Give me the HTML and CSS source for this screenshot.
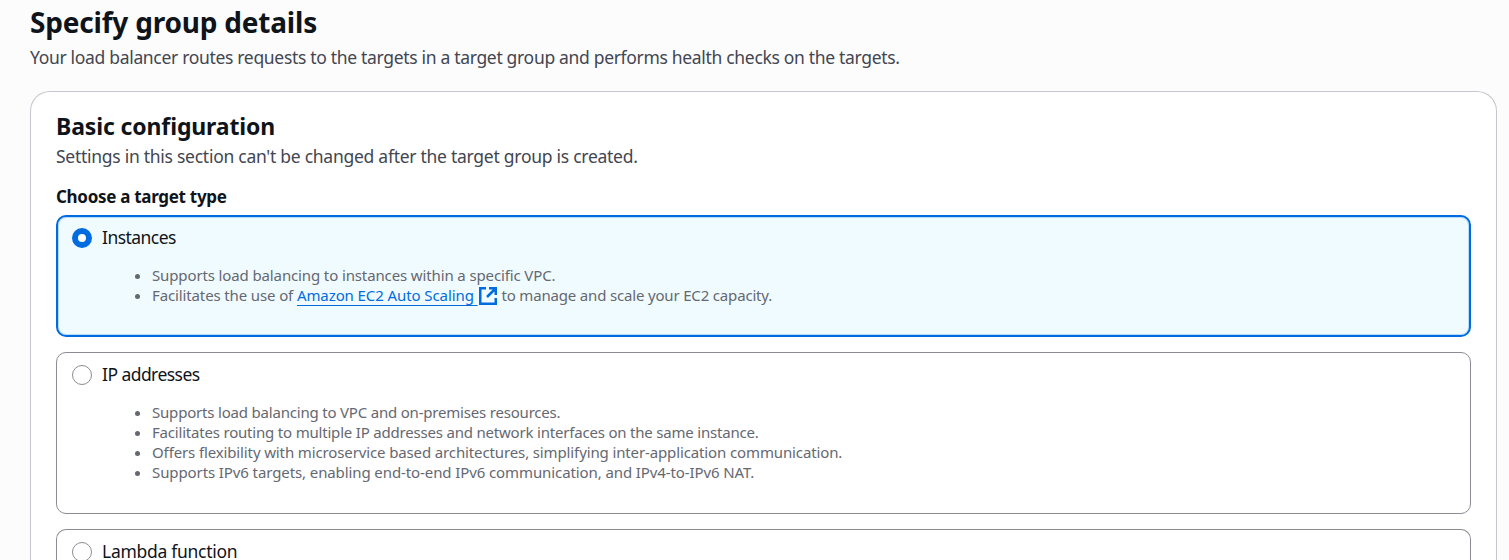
FILE: index.html
```html
<!DOCTYPE html>
<html lang="en">
<head>
<meta charset="utf-8">
<title>Specify group details</title>
<link rel="stylesheet" href="styles.css">
</head>
<body>
<main class="page">
  <header class="page-header">
    <h1 class="page-title">Specify group details</h1>
    <p class="page-description">Your load balancer routes requests to the targets in a target group and performs health checks on the targets.</p>
  </header>
  <section class="container">
    <h2 class="container-title">Basic configuration</h2>
    <p class="container-description">Settings in this section can't be changed after the target group is created.</p>
    <h3 class="field-label">Choose a target type</h3>
    <div class="tiles">
      <div class="tile tile-selected">
        <span class="radio radio-checked"></span>
        <div class="tile-body">
          <div class="tile-label label-instances">Instances</div>
          <ul class="tile-list">
            <li>Supports load balancing to instances within a specific VPC.</li>
            <li>Facilitates the use of <a class="link">Amazon EC2 Auto Scaling <svg class="external-icon" viewBox="0 0 20 20"><path d="M8 2.25H2.25V17.75H17.75V12M11 2.25H17.75V9M17.5 2.5L9 11"/></svg></a> <span class="after-link">to manage and scale your EC2 capacity.</span></li>
          </ul>
        </div>
      </div>
      <div class="tile">
        <span class="radio"></span>
        <div class="tile-body">
          <div class="tile-label label-ip">IP addresses</div>
          <ul class="tile-list">
            <li class="text-tight">Supports load balancing to VPC and on-premises resources.</li>
            <li class="text-tight">Facilitates routing to multiple IP addresses and network interfaces on the same instance.</li>
            <li>Offers flexibility with microservice based architectures, simplifying inter-application communication.</li>
            <li class="text-wide">Supports IPv6 targets, enabling end-to-end IPv6 communication, and IPv4-to-IPv6 NAT.</li>
          </ul>
        </div>
      </div>
      <div class="tile tile-last">
        <span class="radio"></span>
        <div class="tile-body">
          <div class="tile-label label-lambda">Lambda function</div>
        </div>
      </div>
    </div>
  </section>
</main>
</body>
</html>
```

FILE: styles.css
```css
* { box-sizing: border-box; }
html, body { height: 100%; }
body {
  margin: 0;
  overflow: hidden;
  background: #fcfcfd;
  color: #0f141a;
  font-family: "Noto Sans", "Open Sans", sans-serif;
}
h1, h2, h3, p, ul { margin: 0; }
.page {
  display: flex;
  flex-direction: column;
  height: 100%;
  padding: 4px 12px 0 30px;
}
.page-title { font-size: 28px; line-height: 36px; letter-spacing: -0.2px; }
.page-description {
  margin-top: 5px;
  font-size: 17.5px;
  line-height: 25px;
  letter-spacing: -0.32px;
  color: #424650;
}
.container {
  display: flex;
  flex-direction: column;
  flex: 1;
  min-height: 0;
  margin-top: 21px;
  padding: 19px 25px 0;
  border: 1px solid #c6c6cd;
  border-bottom: 0;
  border-radius: 20px 20px 0 0;
  background: #fff;
}
.container-title { font-size: 23px; line-height: 30px; letter-spacing: -0.13px; }
.container-description {
  margin-top: 3px;
  font-size: 17.5px;
  line-height: 25px;
  letter-spacing: -0.27px;
  color: #424650;
}
.field-label { margin-top: 15px; font-size: 17px; line-height: 25px; letter-spacing: -0.3px; }
.tiles {
  display: flex;
  flex-direction: column;
  flex: 1;
  min-height: 0;
  gap: 15px;
  margin-top: 6px;
}
.tile {
  display: flex;
  flex: none;
  gap: 10px;
  padding: 9px 15px 31px 15px;
  border: 1px solid #8c8c94;
  border-radius: 10px;
  background: #fff;
}
.tile-selected {
  padding: 8px 14px 30px 14px;
  border: 2px solid #006ce0;
  background: #f0fbff;
  box-shadow: inset 0 0 0 1px #b5dafa;
}
.tile-last {
  flex: 1;
  min-height: 0;
  padding: 9px 15px 0;
  overflow: hidden;
  border-bottom: 0;
  border-radius: 10px 10px 0 0;
}
.radio {
  flex: none;
  width: 20px;
  height: 20px;
  margin-top: 3px;
  border: 1px solid #8c8c94;
  border-radius: 50%;
  background: #fff;
}
.radio-checked { border: 6px solid #006ce0; }
.tile-label { font-size: 17.5px; line-height: 25px; }
.label-instances { letter-spacing: -0.55px; }
.label-ip { letter-spacing: -0.55px; }
.label-lambda { letter-spacing: -0.28px; }
.tile-list {
  margin-top: 15px;
  padding-left: 50px;
  font-size: 15px;
  line-height: 20px;
  letter-spacing: -0.125px;
  color: #656871;
}
.tile-list li { height: 20px; white-space: nowrap; }
.tile-list .text-tight { letter-spacing: -0.195px; }
.tile-list .text-wide { letter-spacing: -0.1px; }
.link {
  color: #006ce0;
  letter-spacing: -0.09px;
  text-decoration: underline;
  text-decoration-thickness: 1px;
  text-underline-offset: 4px;
}
.external-icon {
  width: 20px;
  height: 20px;
  vertical-align: -5px;
  fill: none;
  stroke: #006ce0;
  stroke-width: 2.5;
}
.after-link { letter-spacing: -0.17px; }
```
